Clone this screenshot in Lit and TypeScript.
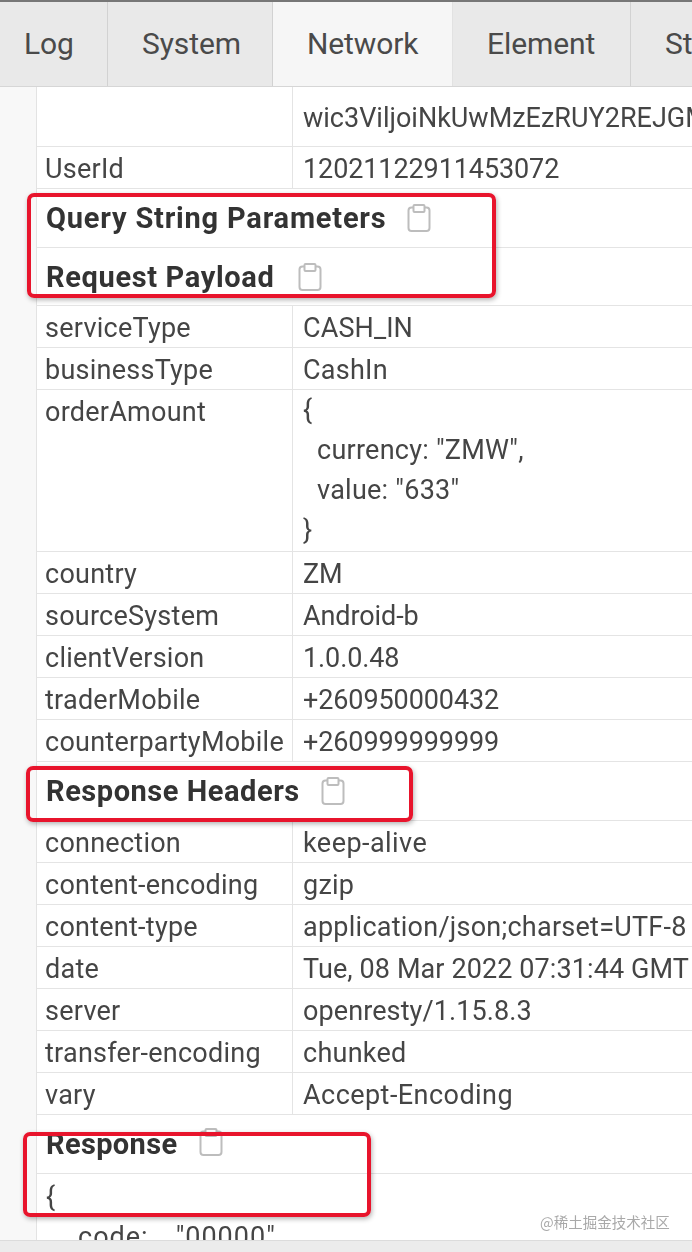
import { LitElement, html, css } from "lit";
import { customElement } from "lit/decorators.js";

const clip = html`<svg class="clip" viewBox="0 0 24 28" width="24" height="28" fill="none" stroke="#bdbdbd" stroke-width="2"><rect x="1.5" y="3.5" width="21" height="23.5" rx="3"/><rect x="6.5" y="1" width="11" height="7" rx="1" fill="#fff"/></svg>`;

type R = [string, string, string?];

@customElement("app-root")
export class AppRoot extends LitElement {
  static styles = css`
    :host { display: block; width: 692px; height: 1252px; overflow: hidden; position: relative; background: #fff; font-family: Roboto, "Noto Sans", sans-serif; color: #454545; font-size: 27px; letter-spacing: .25px; }
    .page { display: flex; flex-direction: column; height: 1252px; filter: blur(0.4px); }
    .top { height: 2px; background: #777; flex: none; }
    .tabs { display: flex; height: 84px; flex: none; background: #e9e9e9; border-bottom: 1px solid #d6d6d6; overflow: hidden; }
    .tab { flex: none; display: flex; align-items: center; box-sizing: border-box; border-right: 1px solid #d2d2d2; padding-left: 34px; font-size: 30px; letter-spacing: -.1px; color: #4a4a4a; padding-bottom: 1px; }
    .tab.first { padding-left: 24px; }
    .tab.on { background: #f6f6f6; border-color: #e2e2e2; }
    .body { flex: 1; min-height: 0; display: flex; overflow: hidden; }
    .gut { width: 36px; flex: none; background: #f8f8f8; border-right: 1px solid #e3e3e3; }
    .table { flex: 1; min-width: 0; overflow: hidden; }
    .row { display: flex; border-bottom: 1px solid #e4e4e4; box-sizing: border-box; height: 42px; line-height: 44px; white-space: nowrap; }
    .k { width: 256px; flex: none; box-sizing: border-box; padding-left: 8px; border-right: 1px solid #e4e4e4; }
    .v { padding-left: 10px; }
    .num .v { letter-spacing: -.1px; }
    .tight .v { letter-spacing: .1px; }
    .wide .v { letter-spacing: .45px; }
    .tall { height: 60px; line-height: 62px; }
    .tall .v { letter-spacing: 0; }
    .multi { height: 162px; line-height: 40px; }
    .multi .k { line-height: 44px; }
    .ind { padding-left: 14px; }
    .sec { height: 59px; box-sizing: border-box; display: flex; align-items: center; gap: 21px; padding: 0 0 0 9px; font-weight: 700; font-size: 29px; letter-spacing: .8px; color: #333; border-bottom: 1px solid #e4e4e4; }
    .sec.s58 { height: 58px; letter-spacing: .65px; gap: 23px; }
    .sec.rh { letter-spacing: .55px; }
    .sec.resp { letter-spacing: .35px; gap: 22px; }
    .sec.resp .clip { position: relative; top: -2px; }
    .raw { padding: 3px 0 0 9px; line-height: 40px; }
    .code { display: flex; gap: 27px; padding: 0 0 0 32px; white-space: nowrap; letter-spacing: 1px; }
    .foot { height: 12px; flex: none; background: #ececec; border-top: 1px solid #dcdcdc; box-sizing: border-box; }
    .mark { position: absolute; box-sizing: border-box; border: 4px solid #e8142c; border-radius: 7px; box-shadow: 1px 2px 5px rgba(0,0,0,.3); filter: blur(0.4px); }
    .m1 { left: 27px; top: 193px; width: 469px; height: 105px; }
    .m2 { left: 26px; top: 766px; width: 387px; height: 56px; }
    .m3 { left: 23px; top: 1132px; width: 348px; height: 85px; }
    .wm { position: absolute; left: 540px; top: 1211px; font-size: 14.5px; letter-spacing: 0; color: #a9a9a9; font-family: "Noto Sans CJK SC", sans-serif; white-space: nowrap; }
  `;

  private row(k: string, v: unknown, cls = "") {
    return html`<div class="row ${cls}"><div class="k">${k}</div><div class="v">${v}</div></div>`;
  }
  private sec(t: string, cls = "") {
    return html`<div class="sec ${cls}"><span>${t}</span>${clip}</div>`;
  }

  render() {
    const tabs: [string, number, string][] = [["Log", 108, "first"], ["System", 165, ""], ["Network", 180, "on"], ["Element", 178, ""], ["Storage", 200, ""]];
    const a: R[] = [["country", "ZM"], ["sourceSystem", "Android-b"], ["clientVersion", "1.0.0.48"], ["traderMobile", "+260950000432"], ["counterpartyMobile", "+260999999999"]];
    const b: R[] = [["connection", "keep-alive", "wide"], ["content-encoding", "gzip"], ["content-type", "application/json;charset=UTF-8"], ["date", "Tue, 08 Mar 2022 07:31:44 GMT", "tight"], ["server", "openresty/1.15.8.3", "tight"], ["transfer-encoding", "chunked"], ["vary", "Accept-Encoding", "wide"]];
    return html`
      <div class="page">
        <div class="top"></div>
        <div class="tabs">
          ${tabs.map(([t, w, c]) => html`<div class="tab ${c}" style="width:${w}px">${t}</div>`)}
        </div>
        <div class="body">
          <div class="gut"></div>
          <div class="table">
            ${this.row("", "wic3ViljoiNkUwMzEzRUY2REJGMzQ4", "tall")}
            ${this.row("UserId", "12021122911453072", "num")}
            ${this.sec("Query String Parameters")}
            ${this.sec("Request Payload", "s58")}
            ${this.row("serviceType", "CASH_IN", "tight")}
            ${this.row("businessType", "CashIn")}
            ${this.row("orderAmount", html`<div>{</div><div class="ind">currency: "ZMW",</div><div class="ind">value: "633"</div><div>}</div>`, "multi")}
            ${a.map(([k, v]) => this.row(k, v, "num"))}
            ${this.sec("Response Headers", "rh")}
            ${b.map(([k, v, c]) => this.row(k, v, c ?? ""))}
            ${this.sec("Response", "resp")}
            <div class="raw"><div>{</div><div class="code"><span>code:</span><span>"00000"</span></div></div>
          </div>
        </div>
        <div class="foot"></div>
      </div>
      <div class="mark m1"></div>
      <div class="mark m2"></div>
      <div class="mark m3"></div>
      <div class="wm">@稀土掘金技术社区</div>
    `;
  }
}
